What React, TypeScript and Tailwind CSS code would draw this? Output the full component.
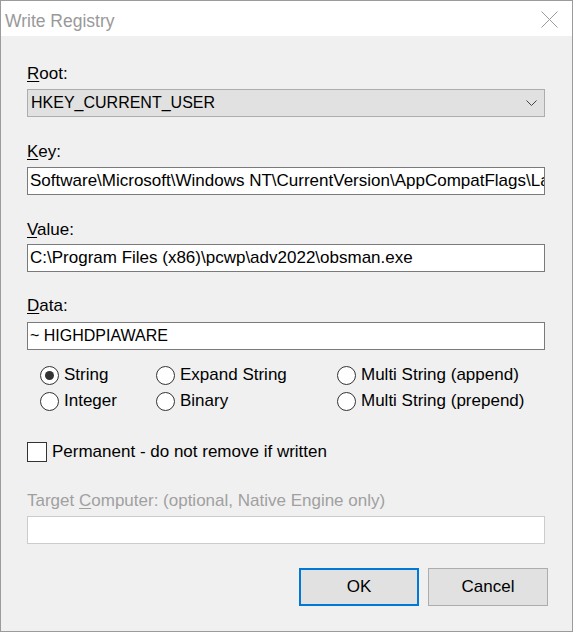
import React from "react";

const font = { fontFamily: '"Liberation Sans", Arial, sans-serif' };

function Label({ k, rest, className = "" }: { k: string; rest: string; className?: string }) {
  return (
    <div className={`h-[20px] leading-[20px] ${className}`}>
      <span className="underline decoration-1 underline-offset-[2px]">{k}</span>
      {rest}
    </div>
  );
}

function TextBox({ value, className = "" }: { value: string; className?: string }) {
  return (
    <div
      className={`h-[28px] w-full flex items-center bg-white border border-[#7a7a7a] pl-[2px] overflow-hidden whitespace-nowrap ${className}`}
    >
      {value}
    </div>
  );
}

function Radio({ label, checked = false }: { label: string; checked?: boolean }) {
  return (
    <div className="flex items-center gap-[5px] h-[26px]">
      <span className="w-[19px] h-[19px] rounded-full border border-[#333] bg-white flex items-center justify-center shrink-0">
        {checked && <span className="w-[9px] h-[9px] rounded-full bg-[#333]" />}
      </span>
      <span>{label}</span>
    </div>
  );
}

export default function App() {
  return (
    <div
      style={font}
      className="w-[573px] h-[632px] border border-[#9b9b9b] bg-[#f0f0f0] text-[17px] text-black flex flex-col"
    >
      {/* title bar */}
      <div className="h-[35px] bg-white flex items-start justify-between pt-[10px] pl-[4px] pr-[14px]">
        <div className="text-[17.5px] leading-[20px] text-[#999]">Write Registry</div>
        <svg width="17" height="17" viewBox="0 0 17 17">
          <path d="M0.5 0.5 L16.5 16.5 M16.5 0.5 L0.5 16.5" stroke="#9a9a9a" strokeWidth="1" />
        </svg>
      </div>

      <div className="flex-1 pl-[26px] pr-[27px] pt-[28px]">
        <Label k="R" rest="oot:" />
        <div className="mt-[5px] h-[28px] flex items-center justify-between bg-[#e1e1e1] border border-[#adadad] pl-[3px] pr-[7px] text-[16px]">
          <span>HKEY_CURRENT_USER</span>
          <svg width="11" height="7" viewBox="0 0 11 7">
            <path d="M0.5 0.5 L5.5 5.5 L10.5 0.5" fill="none" stroke="#444" strokeWidth="1" />
          </svg>
        </div>

        <Label k="K" rest="ey:" className="mt-[25px]" />
        <TextBox
          className="mt-[5px]"
          value="Software\Microsoft\Windows NT\CurrentVersion\AppCompatFlags\La"
        />

        <Label k="V" rest="alue:" className="mt-[25px]" />
        <TextBox className="mt-[4px]" value="C:\Program Files (x86)\pcwp\adv2022\obsman.exe" />

        <Label k="D" rest="ata:" className="mt-[24px]" />
        <TextBox className="mt-[6px] text-[16px]" value="~ HIGHDPIAWARE" />

        <div className="mt-[12px] pl-[13px] grid grid-cols-[116px_181px_1fr]">
          <Radio label="String" checked />
          <Radio label="Expand String" />
          <Radio label="Multi String (append)" />
          <Radio label="Integer" />
          <Radio label="Binary" />
          <Radio label="Multi String (prepend)" />
        </div>

        <div className="mt-[25px] h-[26px] flex items-center gap-[5px]">
          <span className="w-[20px] h-[20px] border border-[#333] bg-white shrink-0" />
          <span>Permanent - do not remove if written</span>
        </div>

        <div className="mt-[26px] h-[20px] leading-[20px] text-[#a0a0a0]">
          Target <span className="underline decoration-1 underline-offset-[2px]">C</span>omputer: (optional, Native Engine only)
        </div>
        <div className="mt-[5px] h-[28px] w-full bg-white border border-[#cccccc]" />

        <div className="mt-[24px] mr-[-3px] flex justify-end gap-[9px]">
          <button className="w-[120px] h-[38px] bg-[#e1e1e1] border-2 border-[#0078d7]">OK</button>
          <button className="w-[120px] h-[38px] bg-[#e1e1e1] border border-[#adadad]">Cancel</button>
        </div>
      </div>
    </div>
  );
}
